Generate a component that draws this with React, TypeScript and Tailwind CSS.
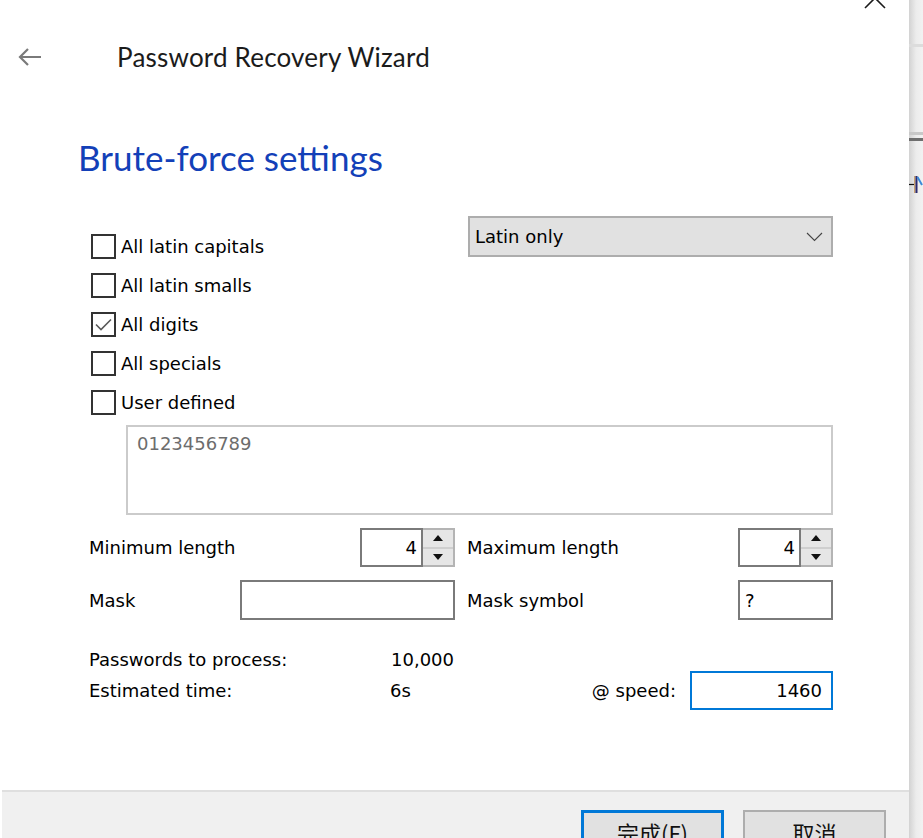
import React from "react";

const body = "font-['DejaVu_Sans',sans-serif] text-[18px] text-black";

function Check({ label, checked }: { label: string; checked?: boolean }) {
    return (
        <div className="flex items-center h-[39px]">
            <div className="ml-[2px] w-[25px] h-[25px] border-2 border-[#333333] bg-white flex items-center justify-center">
                {checked &&
                    <svg width="19" height="15" viewBox="0 0 19 15">
                        <path d="M2 7.5 L7 12.5 L17 2.5" fill="none" stroke="#5a5a5a" strokeWidth="1.6" />
                    </svg>
                }
            </div>
            <span className="ml-[5px]">{label}</span>
        </div>
    )
}

function Spin({ value }: { value: string }) {
    return (
        <div className="flex w-[95px] h-[39px]">
            <div className="w-[63px] h-full border-2 border-[#7a7a7a] bg-white flex items-center justify-end pr-[4px]">
                {value}
            </div>
            <div className="w-[32px] h-full border-2 border-l-0 border-[#b4b4b4] bg-[#e6e6e6] flex flex-col">
                <div className="flex-1 flex items-center justify-center border-b-2 border-[#cfcfcf]">
                    <svg width="10" height="6" viewBox="0 0 10 6"><path d="M5 0 L10 6 L0 6 Z" fill="#111" /></svg>
                </div>
                <div className="flex-1 flex items-center justify-center">
                    <svg width="10" height="6" viewBox="0 0 10 6"><path d="M0 0 L10 0 L5 6 Z" fill="#111" /></svg>
                </div>
            </div>
        </div>
    )
}

export default function App() {
    return (
        <div className="w-[923px] h-[838px] overflow-hidden flex bg-white">
            <div className="relative w-[909px] h-full flex flex-col">
                {/* close button, mostly above the screen edge */}
                <svg className="absolute left-[863px] top-[-14px]" width="24" height="24" viewBox="0 0 24 24">
                    <path d="M2 2 L22 22 M22 2 L2 22" stroke="#1a1a1a" strokeWidth="1.6" fill="none" />
                </svg>

                <div className="flex items-center h-[40px] mt-[37px]">
                    <svg className="ml-[17px]" width="26" height="20" viewBox="0 0 26 20">
                        <path d="M24 10 H3 M11 2 L3 10 L11 18" fill="none" stroke="#7a7a7a" strokeWidth="2.2" />
                    </svg>
                    <span className="ml-[74px] font-['Lato',sans-serif] text-[26px] text-[#1b1b1b] tracking-[0.2px]">
                        Password Recovery Wizard
                    </span>
                </div>

                <h1 className="mt-[58px] ml-[78px] h-[44px] font-['Lato',sans-serif] text-[35px] leading-[44px] text-[#1340b8]">
                    Brute-force settings
                </h1>

                <div className={`${body} ml-[89px] w-[744px] mt-[37px]`}>
                    <div className="flex justify-between">
                        <div className="pt-[11px]">
                            <Check label="All latin capitals" />
                            <Check label="All latin smalls" />
                            <Check label="All digits" checked />
                            <Check label="All specials" />
                            <Check label="User defined" />
                        </div>
                        <div className="w-[365px] h-[41px] border-2 border-[#adadad] bg-[#e1e1e1] flex items-center justify-between pl-[5px] pr-[8px]">
                            <span>Latin only</span>
                            <svg width="17" height="10" viewBox="0 0 17 10"><path d="M1 1 L8.5 8.5 L16 1" fill="none" stroke="#444" strokeWidth="1.1" /></svg>
                        </div>
                    </div>

                    <div className="mt-[3px] ml-[37px] w-[707px] h-[90px] border-2 border-[#cbcbcb] px-[9px] pt-[3px] text-[#6d6d6d]">
                        0123456789
                    </div>

                    <div className="mt-[13px] flex items-center gap-[12px]">
                        <div className="flex items-center w-[366px]">
                            <span className="flex-1">Minimum length</span>
                            <Spin value="4" />
                        </div>
                        <div className="flex items-center w-[366px]">
                            <span className="flex-1">Maximum length</span>
                            <Spin value="4" />
                        </div>
                    </div>

                    <div className="mt-[13px] flex items-center gap-[12px]">
                        <div className="flex items-center w-[366px]">
                            <span className="flex-1">Mask</span>
                            <div className="w-[215px] h-[40px] border-2 border-[#7a7a7a] bg-white" />
                        </div>
                        <div className="flex items-center w-[366px]">
                            <span className="flex-1">Mask symbol</span>
                            <div className="w-[95px] h-[40px] border-2 border-[#7a7a7a] bg-white flex items-center pl-[5px]">?</div>
                        </div>
                    </div>

                    <div className="mt-[27px] flex items-center h-[24px]">
                        <span className="w-[302px]">Passwords to process:</span>
                        <span>10,000</span>
                    </div>
                    <div className="flex items-center h-[39px]">
                        <span className="w-[301px]">Estimated time:</span>
                        <span className="flex-1">6s</span>
                        <span className="mr-[14px]">@ speed:</span>
                        <div className="w-[143px] h-[39px] border-2 border-[#0078d7] bg-white flex items-center justify-end pr-[9px]">1460</div>
                    </div>
                </div>

                <div className="flex-1" />
                <div className="ml-[2px] h-[48px] border-t-2 border-[#dfdfdf] bg-[#f0f0f0] flex justify-end gap-[19px] pr-[23px] pt-[18px] font-['Noto_Sans_CJK_SC',sans-serif] text-[22px] text-[#111]">
                    <div className="w-[143px] h-[44px] shrink-0 border-[3px] border-[#0078d7] bg-[#e1e1e1] flex items-center justify-center">完成(F)</div>
                    <div className="w-[143px] h-[44px] shrink-0 border-2 border-[#adadad] bg-[#e1e1e1] flex items-center justify-center">取消</div>
                </div>
            </div>

            {/* app window behind the dialog */}
            <div className="flex-1 h-full bg-gradient-to-r from-[#d2d2d2] via-[#ececec] to-[#f2f2f2] flex flex-col">
                <div className="mt-[44px] h-[3px] bg-[#dcdcdc]" />
                <div className="mt-[85px] h-[3px] bg-[#c8c8c8]" />
                <div className="mt-[3px] h-[3px] bg-[#6e6e6e]" />
                <svg className="mt-[35px]" width="14" height="17" viewBox="0 0 14 17">
                    <path d="M0 8.5 H5" stroke="#111" strokeWidth="1.2" />
                    <rect x="5" y="0" width="1.5" height="17" fill="#c8a070" />
                    <rect x="6.5" y="0" width="2" height="17" fill="#2a2a70" />
                    <path d="M8.5 1 L13 9" stroke="#3a8ad8" strokeWidth="2" />
                </svg>
            </div>
        </div>
    )
}
